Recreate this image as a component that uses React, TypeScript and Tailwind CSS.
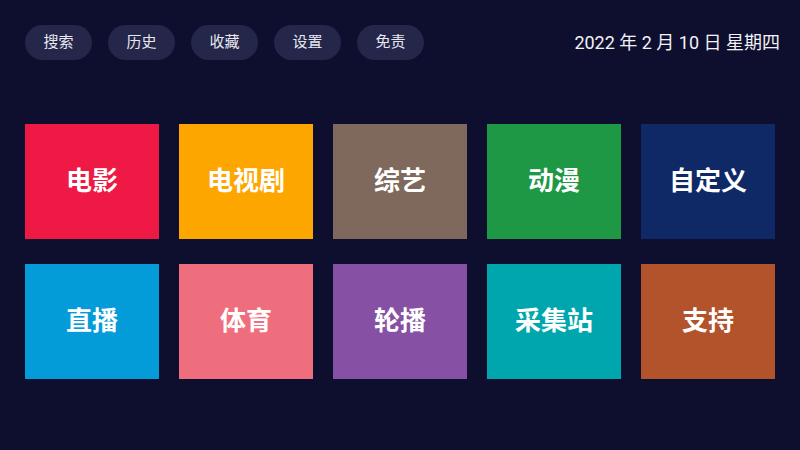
import React from 'react';

const navItems = ['搜索', '历史', '收藏', '设置', '免责'];

const tiles = [
  { label: '电影', color: 'bg-[#ee1944]' },
  { label: '电视剧', color: 'bg-[#fea600]' },
  { label: '综艺', color: 'bg-[#7e695c]' },
  { label: '动漫', color: 'bg-[#1f9846]' },
  { label: '自定义', color: 'bg-[#0f2966]' },
  { label: '直播', color: 'bg-[#039bd8]' },
  { label: '体育', color: 'bg-[#ef6e7e]' },
  { label: '轮播', color: 'bg-[#8651a5]' },
  { label: '采集站', color: 'bg-[#00a6ae]' },
  { label: '支持', color: 'bg-[#b3532b]' },
];

export default function App() {
  return (
    <div className="w-[800px] h-[450px] bg-[#0e0f2f] font-['Roboto','Noto_Sans_CJK_SC',sans-serif] overflow-hidden">
      <div className="flex items-center justify-between pt-[25px] pl-[25px] pr-[20px]">
        <div className="flex gap-[16px]">
          {navItems.map((item) => (
            <div
              key={item}
              className="w-[67px] h-[35px] rounded-full bg-[#24264a] flex items-center justify-center text-[15px] text-[#e8e8f0]"
            >
              {item}
            </div>
          ))}
        </div>
        <div className="text-[18px] text-[#f2f2f6]">2022 年 2 月 10 日 星期四</div>
      </div>
      <div className="grid grid-cols-5 gap-x-[20px] gap-y-[25px] px-[25px] mt-[64px]">
        {tiles.map((t) => (
          <div
            key={t.label}
            className={`${t.color} h-[115px] flex items-center justify-center text-white text-[26px] font-bold`}
          >
            {t.label}
          </div>
        ))}
      </div>
    </div>
  );
}
